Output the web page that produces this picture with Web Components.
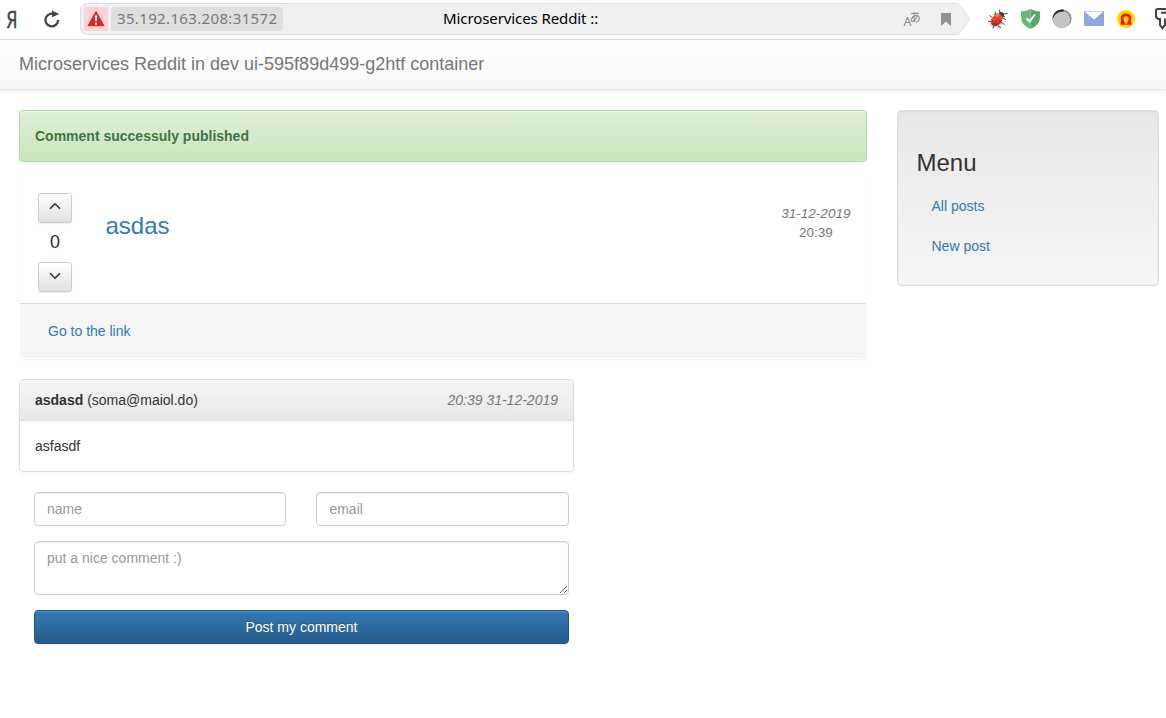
<!DOCTYPE html>
<html lang="en">
<head>
<meta charset="utf-8">
<title>Microservices Reddit ::</title>
<style>
html,body{margin:0;height:100%;background:#fff;overflow:hidden}
body{font:14px/20px "Liberation Sans",Arial,sans-serif;color:#333}
</style>
</head>
<body>
<reddit-app></reddit-app>

<template id="t-browser-bar">
<style>
:host{display:flex;box-sizing:border-box;height:40px;border-bottom:1px solid #e1e1e1;background:#fff;overflow:hidden;font-family:"Noto Sans",sans-serif}
svg{display:block;flex:none}
.nav{display:flex;width:80px;flex:none}
.address{position:relative;display:flex;align-items:center;flex:none;box-sizing:border-box;width:890px;height:32px;margin-top:3px;padding-left:4px}
.shape{position:absolute;left:0;top:0}
.warn,.ip,.title,.tools{position:relative}
.warn{width:24px;height:24px;border-radius:3px;background:#fbd3d5}
.ip{box-sizing:border-box;width:172px;height:24px;margin-left:3px;padding-left:6px;border-radius:3px;background:#dedfe1;color:#77797b;font-size:15px;line-height:23px;letter-spacing:.35px;white-space:nowrap}
.title{margin-left:160px;width:300px;color:#000;font-size:15px;line-height:22px;height:24px;letter-spacing:-.09px;white-space:nowrap}
.tools{margin-left:156px}
</style>
<div class="nav">
<svg width="80" height="39"><text transform="translate(6.4 28) scale(.72 1)" font-family="Noto Sans, sans-serif" font-size="24" fill="#3b454b" stroke="#3b454b" stroke-width=".5">Я</text>
<path d="M55.8 15A6.4 6.4 0 1 0 58.2 20" fill="none" stroke="#3b454b" stroke-width="2.3"/><path d="M52 10.4L59.2 14 52 17.3Z" fill="#3b454b"/></svg>
</div>
<div class="address">
<svg class="shape" width="890" height="32"><path d="M8 .5H876Q879 .5 880.8 3.2L889.5 16 880.8 28.8Q879 31.5 876 31.5H8Q.5 31.5.5 24V8Q.5.5 8 .5Z" fill="#eff0f2" stroke="#dededf"/></svg>
<div class="warn"><svg width="24" height="24"><path d="M12 4.6L20 18.7H4Z" fill="#e1252b" stroke="#e1252b" stroke-linejoin="round"/><path d="M12 8.5V14M12 15.6V17.8" stroke="#fff" stroke-width="2"/></svg></div>
<div class="ip">35.192.163.208:31572</div>
<div class="title">Microservices Reddit ::</div>
<div class="tools"><svg width="60" height="32"><text x="4.5" y="23" font-family="Noto Sans, sans-serif" font-size="12.5" fill="#88898b">A</text><text transform="translate(10.6 18.8) scale(.9 1)" font-family="Noto Sans CJK JP, sans-serif" font-size="12.5" fill="#808183">あ</text><path d="M42 10H52V23L47 18.6 42 23Z" fill="#909193"/></svg></div>
</div>
<svg width="196" height="39" viewBox="970 0 196 39">
<defs><linearGradient id="bug" x1="0" y1="0" x2="1" y2="1"><stop stop-color="#ff9b5c"/><stop offset=".45" stop-color="#ed4b27"/><stop offset="1" stop-color="#a81208"/></linearGradient></defs>
<ellipse cx="996" cy="24" rx="7" ry="4" fill="#bbb" opacity=".45"/>
<g stroke="#4a4e50" stroke-width="1" fill="none"><path d="M993 18L989.5 15.5M991 22L988 21M994 25L993 28.5M998 26L1001 28M1001 22L1004.5 24.5M1002 18L1006 19.5M996 16L995 11.5M1000 13L999.5 9.5M1003 14L1007.5 13.5M998 14L994 14.5M1003 16L1005 17"/></g>
<circle cx="1001.2" cy="15" r="2.9" fill="#3c4145"/><ellipse cx="996.5" cy="20.2" rx="5.1" ry="6.6" transform="rotate(43 996.5 20.2)" fill="url(#bug)"/><path d="M1000.5 16L993 24.5" stroke="#921a10" stroke-width=".7"/><g fill="#6b2118"><circle cx="995" cy="17.6" r=".8"/><circle cx="999.7" cy="20.7" r=".8"/><circle cx="996.8" cy="24" r=".7"/><circle cx="992.5" cy="21" r=".7"/></g>
<path d="M1030.5 9Q1026 11.2 1021 11.4V17Q1021 25 1030.5 29Z" fill="#67b879"/><path d="M1030.5 9Q1035 11.2 1040 11.4V17Q1040 25 1030.5 29Z" fill="#58a868"/><path d="M1026.5 18.3L1029.5 21.4 1035 14.5" fill="none" stroke="#fff" stroke-width="2"/>
<circle cx="1062.4" cy="18.6" r="9.2" fill="#8b8b8b"/><path d="M1053.3 22.5A9.6 9.6 0 0 1 1063.5 9.6V19Z" fill="#292929"/><circle cx="1061.4" cy="19.5" r="8.7" fill="#c4c4c4"/><path d="M1052.4 18.3A9.6 9.6 0 0 1 1064 9.9L1063.7 11.5C1058 11.7 1054.5 14 1053 18.6Z" fill="#292929"/>
<path d="M1084 11H1104V26H1084Z" fill="#91a6dc"/><path d="M1084.5 11.5H1103.5L1094 19.4Z" fill="#fff"/>
<circle cx="1126" cy="19" r="9" fill="#ffd500"/><path d="M1120.6 23.4H1123.6C1120.9 19.5 1121.2 14.8 1126 14.8S1131.1 19.5 1128.4 23.4H1131.4" fill="none" stroke="#f5180c" stroke-width="2.7"/>
<path d="M1169 9H1158Q1156 9 1156 11V16Q1156 18.3 1158.7 19H1160V25L1162.5 28.3 1165 25V19.5H1169M1161 12.7H1166" fill="none" stroke="#3b454b" stroke-width="2.1"/>
</svg>
</template>

<template id="t-site-header">
<style>
:host{display:block;box-sizing:border-box;height:50px;padding:0 19px;border-bottom:1px solid #e7e7e7;background:linear-gradient(#fff,#f8f8f8);box-shadow:inset 0 1px 0 rgba(255,255,255,.15),0 1px 5px rgba(0,0,0,.075);color:#777;font-size:18px;line-height:48px}
</style>
<slot></slot>
</template>

<template id="t-flash-message">
<style>
:host{display:block;box-sizing:border-box;height:52px;padding:15px;border:1px solid #b2dba1;border-radius:4px;background:linear-gradient(#dff0d8,#c8e5bc);box-shadow:inset 0 1px 0 rgba(255,255,255,.25),0 1px 2px rgba(0,0,0,.05);color:#3c763d;font-weight:bold;text-shadow:0 1px 0 rgba(255,255,255,.2)}
</style>
<slot></slot>
</template>

<template id="t-vote-button">
<style>
:host{display:block}
button{display:flex;box-sizing:border-box;width:34px;height:30px;align-items:center;justify-content:center;padding:0;border:1px solid #ccc;border-radius:3px;background:linear-gradient(#fff,#e0e0e0);box-shadow:inset 0 1px 0 rgba(255,255,255,.15),0 1px 1px rgba(0,0,0,.075)}
:host([down]) svg{transform:scaleY(-1);margin-bottom:2px}
svg{display:block;margin-bottom:4px}
</style>
<button><svg width="12" height="8"><path d="M1 6.8L6 1.8 11 6.8" fill="none" stroke="#333" stroke-width="1.6"/></svg></button>
</template>

<template id="t-post-card">
<style>
:host{display:block;box-sizing:border-box;height:177px;border:1px solid transparent;border-radius:4px;box-shadow:0 1px 2px rgba(0,0,0,.05)}
.body{display:flex;box-sizing:border-box;height:120px;padding:10px 15.6px 0 18px}
.votes{display:flex;flex-direction:column;align-items:center;width:34px}
.score{height:39px;font-size:18px;line-height:38px}
h3{margin:16px 0 0 33.5px;font-size:24px;font-weight:400;line-height:34px;color:#337ab7}
.date{margin:11px 0 0 auto;color:#777;font-size:13.5px;line-height:19px;text-align:center}
i{display:block}
footer{box-sizing:border-box;height:55px;padding:17px 28px;border-top:1px solid #ddd;border-radius:0 0 3px 3px;background:#f5f5f5;color:#337ab7}
</style>
<div class="body"><div class="votes"><vote-button></vote-button><div class="score">0</div><vote-button down></vote-button></div>
<h3><slot name="title"></slot></h3><div class="date"><i>31-12-2019</i>20:39</div></div>
<footer><slot name="link"></slot></footer>
</template>

<template id="t-comment-card">
<style>
:host{display:block;box-sizing:border-box;width:555px;height:93px;border:1px solid #ddd;border-radius:4px;box-shadow:0 1px 2px rgba(0,0,0,.05)}
header{display:flex;justify-content:space-between;box-sizing:border-box;height:41px;padding:10px 15px;border-bottom:1px solid #ddd;border-radius:3px 3px 0 0;background:linear-gradient(#f5f5f5,#e8e8e8)}
i{color:#777}
.text{padding:15px}
</style>
<header><span><slot name="author"></slot></span><i><slot name="date"></slot></i></header>
<div class="text"><slot></slot></div>
</template>

<template id="t-comment-form">
<style>
:host{display:grid;grid-template-columns:252.4px 252.6px;column-gap:30px;row-gap:15px;width:535px;margin-left:15px}
input,textarea{display:block;box-sizing:border-box;width:100%;height:34px;margin:0;padding:6px 12px;border:1px solid #ccc;border-radius:4px;background:#fff;box-shadow:inset 0 1px 1px rgba(0,0,0,.075);color:#555;font:inherit;outline:0}
textarea{height:54px;overflow:auto;resize:vertical;grid-column:1/-1}
::placeholder{color:#999;opacity:1}
button{grid-column:1/-1;height:34px;padding:6px 12px;border:1px solid #245580;border-radius:4px;background:linear-gradient(#337ab7,#265a88);box-shadow:inset 0 1px 0 rgba(255,255,255,.15),0 1px 1px rgba(0,0,0,.075);color:#fff;font:inherit;text-shadow:0 -1px 0 rgba(0,0,0,.2)}
</style>
<input placeholder="name"><input placeholder="email"><textarea placeholder="put a nice comment :)"></textarea><button>Post my comment</button>
</template>

<template id="t-side-menu">
<style>
:host{display:block;box-sizing:border-box;width:262px;height:176px;padding:19px 18.5px;border:1px solid #dcdcdc;border-radius:4px;background:linear-gradient(#e8e8e8,#f5f5f5);box-shadow:inset 0 1px 3px rgba(0,0,0,.05),0 1px 0 rgba(255,255,255,.1)}
h3{margin:20px 0 10px;font-size:24px;font-weight:400;line-height:26px;color:#333}
nav{display:flex;flex-direction:column;color:#337ab7}
::slotted(span){display:block;padding:10px 15px}
</style>
<h3>Menu</h3><nav><slot></slot></nav>
</template>

<template id="t-reddit-app">
<style>
:host{display:block}
main{display:grid;grid-template-columns:848px 262px;column-gap:30px;align-items:start;padding:20px 0 0 19px}
.content{display:grid;row-gap:20px}
</style>
<browser-bar></browser-bar>
<site-header>Microservices Reddit in dev ui-595f89d499-g2htf container</site-header>
<main><section class="content">
<flash-message>Comment successuly published</flash-message>
<post-card><span slot="title">asdas</span><span slot="link">Go to the link</span></post-card>
<comment-card><b slot="author">asdasd</b><span slot="author"> (soma@maiol.do)</span><span slot="date">20:39 31-12-2019</span>asfasdf</comment-card>
<comment-form></comment-form>
</section><side-menu><span>All posts</span><span>New post</span></side-menu></main>
</template>

<script>
class TemplateElement extends HTMLElement {
  constructor() {
    super();
    this.attachShadow({mode: 'open'}).append(document.getElementById('t-' + this.localName).content.cloneNode(true));
  }
}
for (const name of ['browser-bar','site-header','flash-message','vote-button','post-card','comment-card','comment-form','side-menu','reddit-app'])
  customElements.define(name, class extends TemplateElement {});
</script>
</body>
</html>
